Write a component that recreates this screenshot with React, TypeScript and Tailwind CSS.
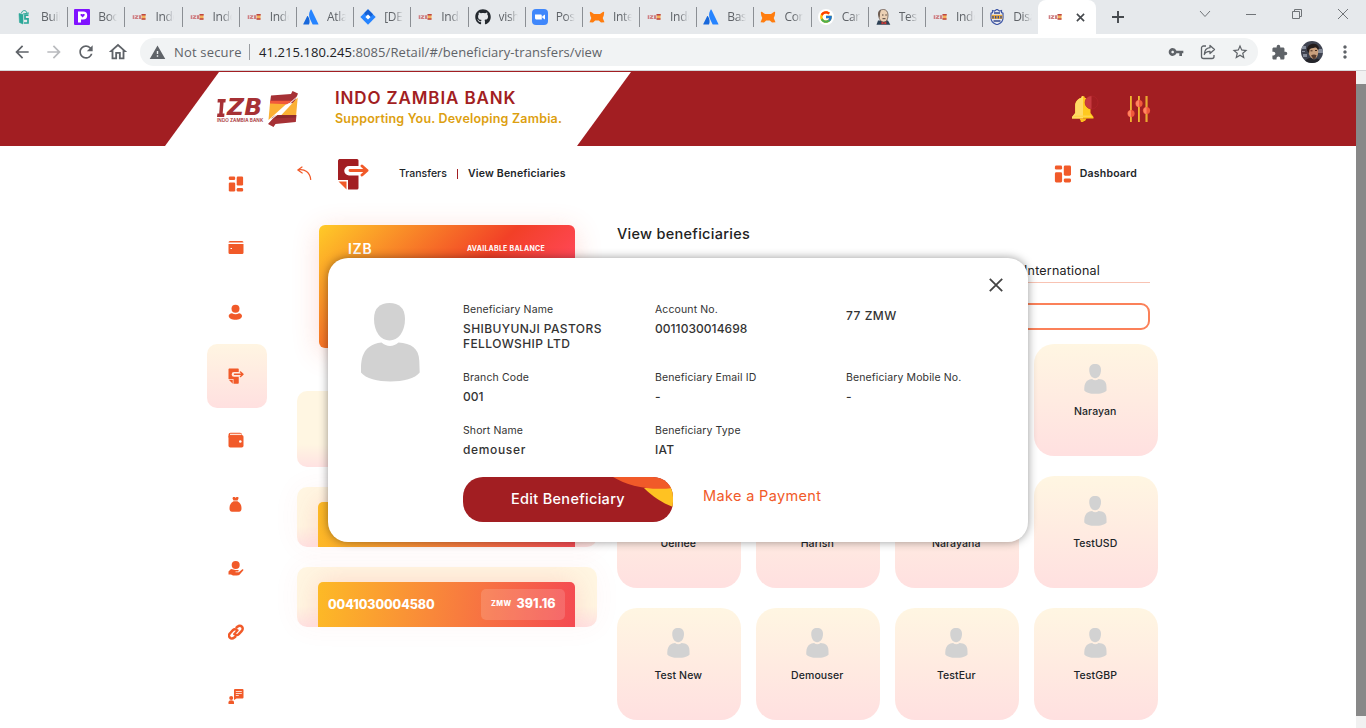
import React from "react";
import {
  MdArrowBack,
  MdArrowForward,
  MdRefresh,
  MdWarning,
  MdVpnKey,
  MdStarBorder,
  MdExtension,
  MdMoreVert,
  MdOutlineHome,
} from "react-icons/md";
import { FaGithub } from "react-icons/fa";
import { FcGoogle } from "react-icons/fc";

const IzbFav = () => (
  <svg viewBox="0 0 16 16" className="h-4 w-4">
    <g fill="#cf8084">
      <rect x="1.700" y="6.200" width="1.600" height="3.800" />
      <path d="M3.800 6.200h3.600v1L5.600 9h1.800v1H3.700V9l1.700-1.900H3.800z" />
      <rect x="8" y="6.200" width="2.300" height="3.800" />
    </g>
    <rect x="10.800" y="5.500" width="3.700" height="5" fill="#f5b25a" />
    <path d="M10.500 5h4.200v1.500h-4.200zM10.500 9.300h4v1.500h-4z" fill="#bd4543" />
  </svg>
);

const AtlassianFav = () => (
  <svg viewBox="0 0 16 16" className="h-4 w-4">
    <path d="M4.900 7.300c-.3-.3-.7-.2-.9.100L.3 15c-.1.300.1.600.4.600h4.900c.2 0 .4-.1.500-.3 1.100-2.300.5-5.900-1.200-8z" fill="#1868db" />
    <path d="M7.600.8C5.600 4 5.700 7.400 7 10l2.500 5.200c.1.200.3.400.5.400h5c.4 0 .6-.3.400-.6L8.500.8c-.2-.4-.7-.4-.9 0z" fill="#2684ff" />
  </svg>
);

const JiraFav = () => (
  <svg viewBox="0 0 16 16" className="h-4 w-4">
    <path d="M8 .2 15.700 8 8 15.800.3 8z" fill="#2684ff" />
    <path d="M8 .2 4.500 3.700c0 2 1.500 3 3.500 1.800l2.600 2.500L13 5.300z" fill="#1560d4" />
    <path d="M8 5.400 10.600 8 8 10.600 5.400 8z" fill="#fff" />
  </svg>
);

const FoxFav = () => (
  <svg viewBox="0 0 16 16" className="h-4 w-4" fill="#ff7d0f">
    <path d="M.8 3.500c0-.5.500-.9 1-.7L5 5h6l3.200-2.200c.5-.2 1 .2 1 .7l-.5 3.300-1 2.200 1.800 4.300-3.500.2-2.200-2H6.200L4 13.500.5 13.300l1.800-4.300-1-2.200z" />
  </svg>
);

const ZoomFav = () => (
  <svg viewBox="0 0 16 16" className="h-4 w-4">
    <rect width="16" height="16" rx="4" fill="#3f87fb" />
    <path d="M3 5.500h5.500c.8 0 1.300.5 1.300 1.300v3.700H4.500c-.9 0-1.500-.6-1.500-1.500zM10.300 7.200 13 5.500v5L10.300 8.800z" fill="#fff" />
  </svg>
);

const PFav = () => (
  <svg viewBox="0 0 16 16" className="h-4 w-4">
    <rect width="16" height="16" rx="1" fill="#8012ff" />
    <path d="M4 2.500h5.200a4 4 0 0 1 0 8H7v3H4z" fill="#fff" />
    <path d="M8.600 8.600 6.500 6.300c-.3-1.300 1.200-1.700 2.100-.8.900-.9 2.500-.5 2.100.8z" fill="#8012ff" />
  </svg>
);

const BagFav = () => (
  <svg viewBox="0 0 16 16" className="h-4 w-4" fill="none" stroke="#2aa798">
    <path d="M4.500 4.200C5 .7 9.500.7 10 4.200" />
    <path d="M2 4.500 6 5.500v9.500L2.500 13.500z" fill="#2aa798" strokeWidth=".6" />
    <path d="M11.500 6.200H8v3.600h3V14H7" strokeWidth="1.700" />
    <path d="M6 5l6-1" />
  </svg>
);

const ButlerFav = () => (
  <svg viewBox="0 0 16 16" className="h-4 w-4">
    <path d="M1.500 15.800 3 11.500h10l2.300 4.300z" fill="#2d4155" />
    <path d="M3.500 5C3.500 1.500 6 .5 8.500.5S13 2.500 13 6s-1 7-4.300 7S3.500 9 3.500 5z" fill="#ecd0b4" stroke="#53443c" strokeWidth=".7" />
    <path d="M3.200 6c0-3 .8-5 2.800-5.300L5 4.500 4.800 9z" fill="#6b5a4f" />
    <path d="M7 6h1.500M10.300 6h1.500M7.500 9.700h3" stroke="#3d302b" strokeWidth=".9" />
    <path d="m6.500 12.500 2.300 1.200 2.500-1.200v3l-2.500-1-2.300 1z" fill="#d33833" />
  </svg>
);

const ShieldFav = () => (
  <svg viewBox="0 0 16 16" className="h-4 w-4">
    <path d="M3.500 1.500 5.500 2 8 .3 10.500 2l2-.5v2l1.500.7V9c0 3.500-2.500 5.500-6 6.700C4.500 14.500 2 12.500 2 9V4.200l1.500-.7z" fill="#e8e9ef" stroke="#3c55a5" strokeWidth="1.200" />
    <path d="M2.600 5.800h10.800V10H2.600z" fill="#e8a93c" />
    <path d="M4 7v2.500M6.700 7v2.500M9.300 7v2.500M12 7v2.500M5 4h6M4.500 12h7" stroke="#31478f" strokeWidth="1.300" />
  </svg>
);

const tabs: { icon: React.ReactNode; label: string }[] = [
  { icon: <BagFav />, label: "Buil" },
  { icon: <PFav />, label: "Boo" },
  { icon: <IzbFav />, label: "Indo" },
  { icon: <IzbFav />, label: "Indo" },
  { icon: <IzbFav />, label: "Indo" },
  { icon: <AtlassianFav />, label: "Atla" },
  { icon: <JiraFav />, label: "[DE" },
  { icon: <IzbFav />, label: "Indo" },
  { icon: <FaGithub className="h-4 w-4 text-[#24292f]" />, label: "vish" },
  { icon: <ZoomFav />, label: "Pos" },
  { icon: <FoxFav />, label: "Inte" },
  { icon: <IzbFav />, label: "Indo" },
  { icon: <AtlassianFav />, label: "Bas" },
  { icon: <FoxFav />, label: "Con" },
  {
    icon: (
      <span className="flex h-4 w-4 items-center justify-center rounded-full bg-white">
        <FcGoogle className="h-[14px] w-[14px]" />
      </span>
    ),
    label: "Car",
  },
  { icon: <ButlerFav />, label: "Tes" },
  { icon: <IzbFav />, label: "Indo" },
  { icon: <ShieldFav />, label: "Disa" },
];

function TabStrip() {
  return (
    <div className="flex h-[34px] shrink-0 bg-[#e6e9ec] pl-[11px]">
      {tabs.map((t, i) => (
        <div key={i} className="flex w-[57.200px] shrink-0 items-center pl-[6px]">
          <span className="shrink-0">{t.icon}</span>
          <span className="ml-[8px] w-[19px] shrink-0 overflow-hidden font-['Open_Sans','Noto_Sans',sans-serif] text-[12px] whitespace-nowrap tracking-[-0.300px] text-[#5f6368] [mask-image:linear-gradient(to_right,black_50%,transparent)]">
            {t.label}
          </span>
          {i < 17 && <span className="ml-auto h-5 w-px bg-[#8b8f94]" />}
        </div>
      ))}
      <div className="-ml-[2px] flex w-[58px] items-center rounded-t-[8px] bg-white pl-[9px]">
        <IzbFav />
        <svg viewBox="0 0 10 10" className="ml-[13px] h-[9px] w-[9px]" stroke="#45494d" strokeWidth="1.800">
          <path d="M1 1l8 8M9 1 1 9" />
        </svg>
      </div>
      <svg viewBox="0 0 12 12" className="mt-[11px] ml-4 h-3 w-3" stroke="#45494d" strokeWidth="1.900">
        <path d="M6 0v12M0 6h12" />
      </svg>
      <div className="mt-2 ml-auto flex h-3 items-center pr-[17px]">
        <svg viewBox="0 0 12 12" className="h-3 w-3" fill="none" stroke="#707478">
          <path d="m1 3 5 5.500L11 3" />
        </svg>
        <svg viewBox="0 0 12 12" className="ml-[34px] h-3 w-3" stroke="#707478">
          <path d="M1 6.500h10" />
        </svg>
        <svg viewBox="0 0 12 12" className="ml-[34px] h-3 w-3" fill="none" stroke="#707478">
          <path d="M1.500 3.500h7v7h-7zM3.500 3.500v-2h7v7h-2" />
        </svg>
        <svg viewBox="0 0 12 12" className="ml-[34px] h-3 w-3" stroke="#707478">
          <path d="m1 1 10 10M11 1 1 11" />
        </svg>
      </div>
    </div>
  );
}

function AddressBar() {
  return (
    <div className="flex h-[37px] shrink-0 items-center border-b border-[#d5d6d8] bg-white pl-[12px] text-[#5f6368]">
      <MdArrowBack className="h-5 w-5" />
      <MdArrowForward className="ml-3 h-5 w-5 text-[#b9bbbe]" />
      <MdRefresh className="ml-3 h-5 w-5" />
      <MdOutlineHome className="ml-[11px] h-[22px] w-[22px]" />
      <div className="ml-[11px] flex h-7 w-[1118px] items-center rounded-full bg-[#f1f3f4] pr-[9px] pl-[9px] font-['Open_Sans','Noto_Sans',sans-serif] text-[13px]">
        <MdWarning className="h-[17px] w-[17px]" />
        <span className="mt-px ml-2 w-[67px] whitespace-nowrap tracking-[0.180px]">Not secure</span>
        <span className="mx-[8px] h-4 w-px bg-[#9a9da1]" />
        <span className="mt-px ml-px whitespace-nowrap tracking-[0.075px]">
          <span className="text-[#202124]">41.215.180.245</span>
          :8085/Retail/#/beneficiary-transfers/view
        </span>
        <MdVpnKey className="ml-auto h-4 w-4" />
        <svg viewBox="0 0 16 16" className="ml-4 h-4 w-4" fill="none" stroke="#5f6368" strokeWidth="1.300">
          <path d="M6 2H3.500A2 2 0 0 0 1.500 4v8.500a2 2 0 0 0 2 2H12a2 2 0 0 0 2-2V11" />
          <path d="M10 1.500 14.500 5.500 10 9.500V7.300C7.500 7.200 5.500 8 4.300 10.500 4.500 6.500 6.500 4 10 3.700z" strokeLinejoin="round" />
        </svg>
        <MdStarBorder className="ml-[15px] h-[18px] w-[18px]" />
      </div>
      <MdExtension className="ml-[13px] h-[17px] w-[17px]" />
      <svg viewBox="0 0 22 22" className="ml-[13px] h-[22px] w-[22px]">
        <defs>
          <clipPath id="avatar">
            <circle cx="11" cy="11" r="11" />
          </clipPath>
        </defs>
        <g clipPath="url(#avatar)">
          <rect width="22" height="22" fill="#3f4350" />
          <path d="M0 5h5v3H0zM17 8h5v4h-5zM2 13h4v3H2zM1 10h3v1H1z" fill="#858b99" />
          <path d="M7.500 9c1-4 8-5 9.500-1 .8 4-.5 9.500-4 10C9.500 17.500 7 13 7.500 9z" fill="#c99f7c" />
          <path d="M6 9.500C5 2 17 0 18 7l-.8 2.500c-1-2.500-2-3-3.200-3-2.500.5-4.500 1-5.500 2l-.5 4z" fill="#241d1c" />
          <path d="M9.500 9.800h2M14 9.500h2" stroke="#43291c" strokeWidth="1" />
          <path d="M10 14.500c1.800-1.300 4-1.300 5.500-.3l-1 3.300-2 .8z" fill="#5a3d2e" />
          <path d="M3 22c1-3.500 4-5 7-5l3 2 3-1.500c2 .5 4 2 4 4.500z" fill="#24242a" />
        </g>
      </svg>
      <MdMoreVert className="ml-[12px] h-5 w-5" />
    </div>
  );
}

function BankLogo() {
  return (
    <div className="flex h-9 w-[84px]">
      <div className="flex w-[51px] flex-col pl-px text-[#a63135]">
        <div className="flex h-[27px] items-start pt-[6px]">
          <svg viewBox="0 0 9 18" className="mt-[2px] h-[18px] w-[9px] shrink-0" fill="#a63135">
            <path d="M.8 0h8l-.4 3.500H6.600L5.700 14.500h1.800L7.200 18H0l.4-3.500h1.800L3 3.500H.5z" />
          </svg>
          <span className="ml-px font-['DejaVu_Sans',sans-serif] text-[23.500px] leading-[21px] font-bold tracking-[0.300px] italic">ZB</span>
        </div>
        <div className="font-['Inter',sans-serif] text-[4.600px] leading-[6px] font-semibold tracking-[0.060px] whitespace-nowrap">INDO ZAMBIA BANK</div>
      </div>
      <svg viewBox="0 0 32 36" className="h-9 w-8 shrink-0">
        <path d="M4 4.500 24 3 25.500 0l5.500 2.500-3.800 9.800L3 12z" fill="#a63135" />
        <path d="M3 12 21 11.500 1.500 29z" fill="#fbb034" />
        <path d="M3 9.800h22.500L20 13.200 3 12.500z" fill="#f15a3b" />
        <path d="M30.700 6.500 29 25.500H13z" fill="#fbb034" />
        <path d="M9 24h20.500l-.7 7-20.300 2L6.500 36 1 33z" fill="#a63135" />
        <path d="M8 24.500 29 24l-.3 2.500L4 27.500z" fill="#8d2a2c" />
        <path d="M31 5 20.500 14 1 31 12 22.500z" fill="#fff" stroke="#fff" strokeWidth=".5" />
      </svg>
    </div>
  );
}

function BankHeader() {
  return (
    <header className="flex h-[75px] shrink-0 bg-[#a21e22] pt-px">
      <div className="ml-[165px] flex w-[466px] shrink-0 bg-white pt-[19px] pl-[51px] [clip-path:polygon(54px_0,466px_0,412px_100%,0_100%)]">
        <BankLogo />
        <div className="-mt-[1px] ml-[35px] font-semibold whitespace-nowrap">
          <div className="text-[17px] leading-[16px] tracking-[0.870px] text-[#a21e22]">INDO ZAMBIA BANK</div>
          <div className="mt-[5px] text-[12.500px] leading-[16px] tracking-[0.200px] text-[#dd9f10]">Supporting You. Developing Zambia.</div>
        </div>
      </div>
      <svg viewBox="0 0 27 28" className="mt-[23px] ml-[441px] h-7 w-[27px] shrink-0">
        <path d="M11 1c1.500 0 1.700.8 1.700 1.700C17 4 18.500 7 18.500 11v7l3 4v1.500H0V22l3.200-4v-7c0-4 2-7 6.200-8.300C9.400 1.800 9.700 1 11 1z" fill="#ffc91f" />
        <path d="M11 1C9.700 1 9.400 1.800 9.400 2.700 5.200 4 3.200 7 3.200 11v7L0 22v1.500h11z" fill="#ffda66" />
        <path d="M7.500 23.500h7L13 26h-1.500v1H8.800v-1z" fill="#fdbd1e" />
        <path d="M3.500 20.500h15l2 1.500H1.500z" fill="#ffd54a" />
        <circle cx="19.500" cy="7.500" r="6.500" fill="#a21e22" stroke="#b3252b" strokeWidth=".6" />
        <path d="M19.500 1a6.500 6.500 0 0 0 0 13z" fill="#c73a40" />
      </svg>
      <svg viewBox="0 0 24 28" className="mt-[23px] ml-[28px] h-7 w-6 shrink-0">
        <path d="M4 1v26M12 1v26M19.500 1v26" stroke="#f2b632" strokeWidth="2" />
        <path d="M4.500 1v26M12.500 1v26M20 1v26" stroke="#d98a2b" strokeWidth=".6" />
        <circle cx="4" cy="18.500" r="3.600" fill="#f15a3b" />
        <circle cx="12" cy="8.500" r="3.600" fill="#f15a3b" />
        <circle cx="19.500" cy="15.500" r="3.600" fill="#f15a3b" />
        <path d="M4 15a3.600 3.600 0 0 0 0 7.100zM12 5a3.600 3.600 0 0 0 0 7.100zM19.500 12a3.600 3.600 0 0 0 0 7.100z" fill="#ff8562" />
      </svg>
    </header>
  );
}

const DashboardIcon = ({ className }: { className: string }) => (
  <svg viewBox="0 0 16 16" className={className} fill="#f15a29">
    <rect x=".8" y=".5" width="6.400" height="3.500" rx="1.200" />
    <rect x=".8" y="6.500" width="6.400" height="9" rx="1.200" />
    <rect x="8.700" y=".5" width="6.400" height="9" rx="1.200" />
    <rect x="8.700" y="12" width="6.400" height="3.500" rx="1.200" />
  </svg>
);

const TransferIcon = ({ className, sheet }: { className: string; sheet: string }) => (
  <svg viewBox="0 0 32 32" className={className}>
    <path d="M2 1h18a1.500 1.500 0 0 1 1.500 1.500V8H12a4.500 4.500 0 0 0 0 9.500h9.500V30a1.500 1.500 0 0 1-1.500 1.500h-9V22H1V2.500z" fill={sheet} />
    <path d="M1.500 23.500h8v8z" fill="#f15a29" />
    <path d="M13 12.500h17M25 8l5 4.500-5 4.500" fill="none" stroke="#f15a29" strokeWidth="2.900" strokeLinecap="round" strokeLinejoin="round" />
  </svg>
);

const PersonMark = ({ className }: { className: string }) => (
  <svg viewBox="0 0 59 79" className={className} fill="#d2d2d2">
    <path d="M28.500 0C38 0 44 5 44 16c0 13-7 21.500-15.500 21.500S13 29 13 16C13 5 19 0 28.500 0z" />
    <path d="M20.500 39.500c5 4.500 12 4.500 17 0C50 40.500 58 45 58.300 58l.4 11.500C50 81.500 9 81.500 0 69.500 0 58 0 42 20.500 39.500z" />
  </svg>
);

const sideIcons: React.ReactNode[] = [
  <DashboardIcon className="h-4 w-4" />,
  <svg viewBox="0 0 16 16" className="h-4 w-4" fill="#f15a29">
    <path d="M2 1h12a1.500 1.500 0 0 1 1.500 1.500H.5A1.500 1.500 0 0 1 2 1zM.5 4h15v8.800A1.300 1.300 0 0 1 14.200 14H1.800A1.300 1.300 0 0 1 .5 12.800z" />
    <path d="M2.500 8.500h1.500" stroke="#fff" />
  </svg>,
  <svg viewBox="0 0 16 16" className="h-4 w-4" fill="#f15a29">
    <circle cx="7.500" cy="4.700" r="4" />
    <path d="M4 9.200c2.200 1.400 5 1.400 7 0 1.800.3 3 1.300 3 2.700 0 2.300-3 3.800-6.500 3.800S.7 14.200.7 11.900C.7 10.500 2 9.500 4 9.200z" />
  </svg>,
  <TransferIcon className="h-4 w-4" sheet="#f15a29" />,
  <svg viewBox="0 0 16 16" className="h-4 w-4" fill="#f15a29">
    <rect x=".5" y=".8" width="13.500" height="6" rx="2" />
    <rect x=".5" y="3" width="15" height="12.500" rx="1.800" />
    <path d="M2 2.400h11.500" stroke="#ffe1d4" strokeWidth="1.300" />
    <circle cx="12.300" cy="9.500" r="1.300" fill="#fff" />
  </svg>,
  <svg viewBox="0 0 16 16" className="h-4 w-4" fill="#f15a29">
    <path d="M5 1h1.700l.9.700.9-.7h1.800l.2 1.500L9.500 4.500h-4L4.500 2.500z" />
    <path d="M5.500 5.300h4c2.500 1.300 4 3.700 4 6.700 0 2.500-.7 3.700-2.500 3.700H4c-1.800 0-2.500-1.200-2.500-3.700 0-3 1.500-5.400 4-6.700z" />
  </svg>,
  <svg viewBox="0 0 16 16" className="h-4 w-4" fill="#f15a29">
    <circle cx="7.700" cy="5" r="4" />
    <path d="M.5 11.500 3 9c2 .2 3 1 4.500 1H10c1 0 1 1.500 0 1.600H7.500v.6h3.300L14 9.500c1-.6 1.800.3 1.200 1l-3.500 4c-.6.700-1.500.9-2.500.9H5l-2-1H.5z" />
  </svg>,
  <svg viewBox="0 0 16 16" className="h-4 w-4" fill="none" stroke="#f15a29" strokeWidth="2.500" strokeLinecap="round">
    <path d="M8.500 3.500 9.700 2.600a2.900 2.900 0 0 1 4.100 4.200l-3 3.400a2.900 2.900 0 0 1-3.500.4" />
    <path d="M7.300 12.700 6 13.700a2.900 2.900 0 0 1-4.100-4.200l3-3.300a2.900 2.900 0 0 1 3.500-.5" />
    <path d="M6 10.100 9.700 6.200" strokeWidth="2" />
  </svg>,
  <svg viewBox="0 0 16 16" className="h-4 w-4" fill="#f15a29">
    <path d="M7.500 1h7a1 1 0 0 1 1 1v7.500a1 1 0 0 1-1 1h-6L6 12V2a1 1 0 0 1 1-1z" />
    <path d="M7.800 3.500h6M7.800 5.500h6M7.800 7.500h3" stroke="#ffe2d8" strokeWidth=".9" />
    <circle cx="3.200" cy="10" r="2" />
    <path d="M.5 16v-1.700c0-1.300 1-2 2.700-2s2.800.7 2.800 2V16z" />
  </svg>,
];

function Sidebar() {
  return (
    <nav className="ml-[207px] w-[60px] shrink-0 pt-[6px]">
      {sideIcons.map((icon, i) => (
        <div
          key={i}
          className={
            i === 3
              ? "flex h-16 items-center justify-center rounded-[10px] bg-linear-to-b from-[#fff5e2] to-[#ffe0e0] pr-[2px]"
              : "flex h-16 items-center justify-center pr-[2px]"
          }
        >
          {icon}
        </div>
      ))}
    </nav>
  );
}

function AccountRow({ number, amount }: { number?: string; amount?: string }) {
  return (
    <div className="rounded-[10px] shadow-[0_0_28px_rgba(245,80,80,0.05)]">
      <div className="h-[60px] overflow-hidden rounded-[10px] bg-[linear-gradient(#fff6e2_65%,#ffe2e2)] pt-[15px] pr-[22px] pl-[21px]">
        <div className="flex h-[45px] items-center rounded-t-[5px] bg-[linear-gradient(97deg,#fdba26,#f44a52)] pr-[10px] pl-[10px] font-extrabold text-white shadow-[0_0_28px_rgba(245,70,80,0.18)]">
          {number && <span className="mt-px text-[12.500px] tracking-[-0.050px]">{number}</span>}
          {amount && (
            <span className="ml-auto flex h-[31px] w-[84px] items-center rounded-[5px] bg-white/15 pl-[10px] whitespace-nowrap">
              <span className="text-[7.200px] tracking-[0.400px]">ZMW</span>
              <span className="ml-[5px] text-[12.500px]">{amount}</span>
            </span>
          )}
        </div>
      </div>
    </div>
  );
}

function AccountsColumn() {
  return (
    <section className="w-[300px] shrink-0">
      <div className="mt-[25px] ml-[22px] flex h-[123px] w-[256px] items-start justify-between rounded-[6px] bg-[linear-gradient(135deg,#ffcb28,#f24027_53%,#ff4756_76%)] pt-[14px] pr-[30px] pl-[29px] font-semibold text-white shadow-[0_5px_28px_rgba(245,80,50,0.2)]">
        <span className="text-[14px] leading-[19px] tracking-[0.700px]">IZB</span>
        <span className="mt-[4px] text-[7px] leading-[12px] font-bold tracking-[0.240px]">AVAILABLE BALANCE</span>
      </div>
      <div className="mt-[43px] h-[76px] rounded-[10px] bg-[linear-gradient(#fff6e2_70%,#ffe2e2)]" />
      <div className="mt-5">
        <AccountRow />
      </div>
      <div className="mt-5">
        <AccountRow number="0041030004580" amount="391.16" />
      </div>
    </section>
  );
}

const beneficiaries = [
  "", "", "", "Narayan",
  "Uelnee", "Harish", "Narayana", "TestUSD",
  "Test New", "Demouser", "TestEur", "TestGBP",
];

function BeneficiariesColumn() {
  return (
    <section className="ml-5 w-[541px] shrink-0">
      <h1 className="mt-[24px] text-[14.500px] leading-5 font-medium tracking-[0.280px] text-[#222]">View beneficiaries</h1>
      <div className="mt-[17px] flex h-[22px] w-[533px] justify-end border-b border-[#f8c3b3] pr-[50px] text-[12.500px] leading-[19px] tracking-[0.200px] text-[#222]">
        <span>International</span>
      </div>
      <div className="mt-5 h-[27px] w-[533px] rounded-[9px] border-2 border-[#fb8159] bg-white" />
      <div className="mt-[14px] grid grid-cols-[repeat(4,124px)] gap-x-[15px] gap-y-5">
        {beneficiaries.map((name, i) => (
          <div key={i} className="flex h-28 flex-col items-center rounded-[20px] bg-linear-to-b from-[#fff6e2] to-[#ffe0e0] pt-5 pr-[1.500px]">
            <PersonMark className="h-[30px] w-[23px] shrink-0" />
            <span className="mt-[10px] text-[10.500px] leading-4 font-medium tracking-[0.080px] text-[#212529]">{name}</span>
          </div>
        ))}
      </div>
    </section>
  );
}

function Breadcrumbs() {
  return (
    <div className="flex h-[54px] w-[861px] items-center text-[10.500px] text-[#212529]">
      <svg viewBox="0 0 15 15" className="mt-px h-[15px] w-[15px]" fill="none" stroke="#f15a29" strokeWidth="1.200" strokeLinecap="round" strokeLinejoin="round">
        <path d="M5 1 .8 4l4.400 3M1.300 4C7.500 2.600 13 6.500 13.700 13.500" />
      </svg>
      <TransferIcon className="mt-px ml-[25px] h-8 w-8" sheet="#a21e22" />
      <span className="mt-[2px] ml-[30px] w-[48px] font-medium whitespace-nowrap">Transfers</span>
      <span className="mt-[2px] ml-[10px] h-[10px] w-px bg-[#a21e22]" />
      <span className="mt-[2px] ml-[10px] font-semibold tracking-[0.180px] whitespace-nowrap">View Beneficiaries</span>
      <span className="mt-px mr-[21px] ml-auto flex items-center font-semibold">
        <DashboardIcon className="mr-[8px] h-[18px] w-[18px]" />
        <span className="mt-px tracking-[0.200px]">Dashboard</span>
      </span>
    </div>
  );
}

function Field({ label, value, tracking = "tracking-[0.200px]" }: { label?: string; value: string; tracking?: string }) {
  return (
    <div className="text-[#333]">
      {label && <div className="mb-1 text-[10.500px] leading-[15px] tracking-[0.120px]">{label}</div>}
      <div className={`${label ? "" : "pt-[6px]"} text-[12px] leading-[15px] font-medium whitespace-pre-line ${tracking}`}>{value}</div>
    </div>
  );
}

function BeneficiaryDialog() {
  return (
    <div role="dialog" className="absolute top-[258px] left-[328px] flex h-[284px] w-[700px] rounded-[20px] bg-white shadow-[0_0_10px_rgba(0,0,0,0.4)]">
      <PersonMark className="mt-[45px] ml-[33px] h-[79px] w-[59px] shrink-0" />
      <div className="mt-[44px] ml-[43px] w-[540px]">
        <div className="grid grid-cols-[192px_191px_1fr] grid-rows-[68px_53px_54px]">
          <Field label="Beneficiary Name" value={"SHIBUYUNJI PASTORS\nFELLOWSHIP LTD"} tracking="tracking-[0.400px]" />
          <Field label="Account No." value="0011030014698" tracking="tracking-[0.050px]" />
          <Field value="77 ZMW" tracking="tracking-[0.500px]" />
          <Field label="Branch Code" value="001" tracking="tracking-[0px]" />
          <Field label="Beneficiary Email ID" value="-" />
          <Field label="Beneficiary Mobile No." value="-" />
          <Field label="Short Name" value="demouser" tracking="tracking-[0.650px]" />
          <Field label="Beneficiary Type" value="IAT" />
        </div>
        <div className="flex">
          <button className="relative h-[45px] w-[210px] overflow-hidden rounded-[20px] bg-[#a21e22] pb-px text-[14.500px] font-medium tracking-[0.300px] text-white">
            <svg viewBox="0 0 210 45" className="absolute inset-0 h-[45px] w-[210px]">
              <path d="M181 11c8 8 18 15 29 19V9z" fill="#ffc222" />
              <path d="M150 0c15 9 37 14 60 11V0z" fill="#f15a29" />
            </svg>
            <span className="relative">Edit Beneficiary</span>
          </button>
          <span className="mt-[9px] ml-[30px] text-[14.500px] leading-5 tracking-[0.350px] text-[#f15a29]">Make a Payment</span>
        </div>
      </div>
      <svg viewBox="0 0 14 14" className="absolute top-5 right-[25px] h-[14px] w-[14px]" stroke="#444" strokeWidth="1.800">
        <path d="m.8.800 12.400 12.400M13.200.8.800 13.200" />
      </svg>
    </div>
  );
}

export default function App() {
  return (
    <div className="relative flex h-[728px] w-[1366px] flex-col overflow-hidden bg-white font-['Inter','Liberation_Sans',sans-serif]">
      <TabStrip />
      <AddressBar />
      <div className="flex min-h-0 flex-1">
        <div className="flex h-[657px] w-[1356px] flex-col overflow-hidden">
          <BankHeader />
          <div className="flex">
            <Sidebar />
            <main className="ml-[30px]">
              <Breadcrumbs />
              <div className="flex">
                <AccountsColumn />
                <BeneficiariesColumn />
              </div>
            </main>
          </div>
        </div>
        <div className="h-full w-[10px] bg-[#f1f1f1] pt-[13px]">
          <div className="h-[632px] bg-[#888]" />
        </div>
      </div>
      <BeneficiaryDialog />
    </div>
  );
}
